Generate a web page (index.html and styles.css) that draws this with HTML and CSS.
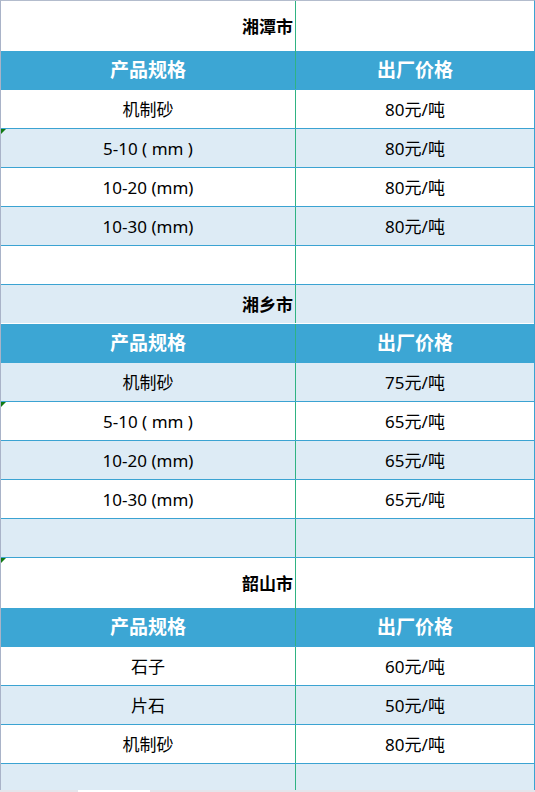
FILE: index.html
```html
<!DOCTYPE html>
<html lang="zh-CN">
<head>
<meta charset="utf-8">
<title>价格表</title>
<link rel="stylesheet" href="styles.css">
</head>
<body>
<div class="sheet">
  <div class="row title white"><div class="cell city">湘潭市</div><div class="cell right"></div></div>
  <div class="row head"><div class="cell">产品规格</div><div class="cell right">出厂价格</div></div>
  <div class="row white"><div class="cell">机制砂</div><div class="cell right">80元/吨</div></div>
  <div class="row light"><div class="cell"><span class="flag"></span>5-10 ( mm )</div><div class="cell right">80元/吨</div></div>
  <div class="row white"><div class="cell">10-20 (mm)</div><div class="cell right">80元/吨</div></div>
  <div class="row light"><div class="cell">10-30 (mm)</div><div class="cell right">80元/吨</div></div>
  <div class="row white"><div class="cell"></div><div class="cell right"></div></div>

  <div class="row title short light"><div class="cell city">湘乡市</div><div class="cell right"></div></div>
  <div class="row head"><div class="cell">产品规格</div><div class="cell right">出厂价格</div></div>
  <div class="row light"><div class="cell">机制砂</div><div class="cell right">75元/吨</div></div>
  <div class="row white"><div class="cell"><span class="flag"></span>5-10 ( mm )</div><div class="cell right">65元/吨</div></div>
  <div class="row light"><div class="cell">10-20 (mm)</div><div class="cell right">65元/吨</div></div>
  <div class="row white"><div class="cell">10-30 (mm)</div><div class="cell right">65元/吨</div></div>
  <div class="row light"><div class="cell"></div><div class="cell right"></div></div>

  <div class="row title white"><div class="cell city"><span class="flag"></span>韶山市</div><div class="cell right"></div></div>
  <div class="row head"><div class="cell">产品规格</div><div class="cell right">出厂价格</div></div>
  <div class="row white"><div class="cell">石子</div><div class="cell right">60元/吨</div></div>
  <div class="row light"><div class="cell">片石</div><div class="cell right">50元/吨</div></div>
  <div class="row white"><div class="cell">机制砂</div><div class="cell right">80元/吨</div></div>
  <div class="row light last"><div class="cell"></div><div class="cell right"></div></div>
</div>
<div class="scrollbar"><div class="thumb"></div></div>
</body>
</html>
```

FILE: styles.css
```css
html, body {
  margin: 0;
  padding: 0;
  background: #ffffff;
}
body {
  width: 535px;
  height: 792px;
  overflow: hidden;
  font-family: "Noto Sans", "Noto Sans CJK SC", sans-serif;
  color: #000000;
}
.sheet {
  width: 535px;
  height: 790px;
  box-sizing: border-box;
  border-top: 1px solid #b3bccd;
  border-left: 1px solid #a9b3c8;
  border-right: 1px solid #3ba3d2;
  display: flex;
  flex-direction: column;
  overflow: hidden;
}
.row {
  display: grid;
  grid-template-columns: 294px 1fr;
  height: 38px;
  flex: none;
  border-bottom: 1px solid #3ba3d2;
  font-size: 17px;
}
.row.white { background: #ffffff; }
.row.light { background: #ddebf5; }
.row.title {
  height: 50px;
  border-bottom: none;
  font-weight: bold;
}
.row.title.short {
  height: 38px;
  border-bottom: 1px solid #ffffff;
}
.row.head {
  background: #3ca6d4;
  color: #ffffff;
  font-weight: bold;
  font-size: 19px;
  border-bottom-color: #3ca6d4;
}
.row.last {
  height: 26px;
  border-bottom: none;
}
.cell {
  position: relative;
  display: flex;
  align-items: center;
  justify-content: center;
  line-height: 1;
  white-space: pre;
}
.cell.right {
  border-left: 1px solid #2fb383;
}
.cell.city {
  justify-content: flex-end;
  padding-right: 2px;
}
.flag {
  position: absolute;
  left: 0;
  top: 0;
  width: 0;
  height: 0;
  border-top: 5px solid #127a12;
  border-right: 5px solid transparent;
}
.scrollbar {
  height: 2px;
  background: #e4e5eb;
  position: relative;
}
.thumb {
  position: absolute;
  left: 78px;
  width: 72px;
  top: 0;
  height: 2px;
  background: #ffffff;
}
```
